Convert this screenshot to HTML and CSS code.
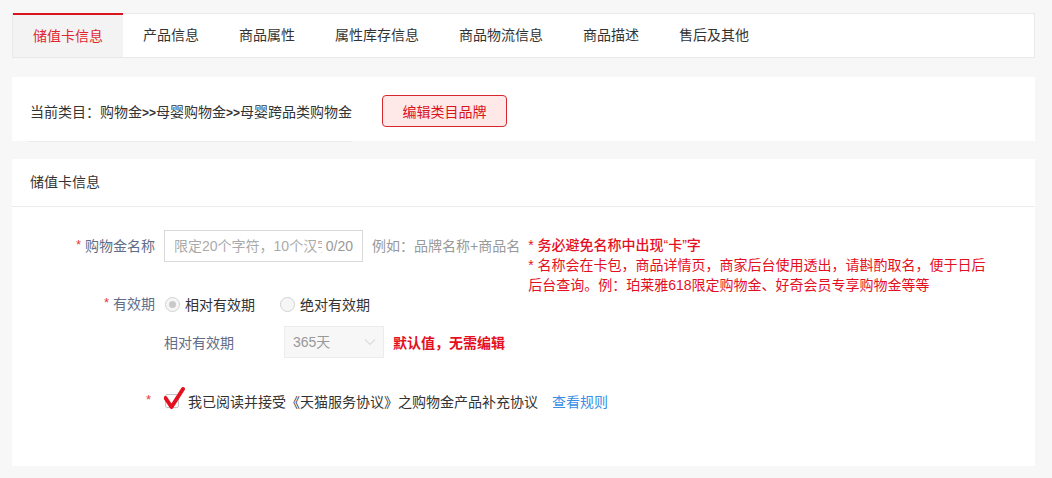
FILE: index.html
```html
<!DOCTYPE html>
<html lang="zh-CN">
<head>
  <meta charset="UTF-8" />
  <meta name="viewport" content="width=device-width, initial-scale=1.0"/>
  <title>储值卡信息</title>
  <link rel="stylesheet" href="styles.css">
</head>
<body>
  <div class="page">
    <nav class="tabs">
      <a class="tab active">储值卡信息</a>
      <a class="tab">产品信息</a>
      <a class="tab">商品属性</a>
      <a class="tab">属性库存信息</a>
      <a class="tab">商品物流信息</a>
      <a class="tab">商品描述</a>
      <a class="tab">售后及其他</a>
    </nav>

    <section class="card category">
      <span class="category-path">当前类目：购物金<b>&gt;&gt;</b>母婴购物金<b>&gt;&gt;</b>母婴跨品类购物金</span>
      <button type="button" class="btn-edit">编辑类目品牌</button>
    </section>

    <section class="card info">
      <header class="card-head">储值卡信息</header>
      <form class="form">
        <div class="form-item item-name">
          <label class="form-label"><i>*</i>购物金名称</label>
          <div class="form-control">
            <div class="input-wrap">
              <input type="text" placeholder="限定20个字符，10个汉字" />
              <span class="count">0/20</span>
            </div>
            <span class="example">例如：品牌名称+商品名</span>
            <div class="hint">
              <div class="hint-main">* 务必避免名称中出现“卡”字</div>
              <div class="hint-sub">* 名称会在卡包，商品详情页，商家后台使用透出，请斟酌取名，便于日后后台查询。例：珀莱雅618限定购物金、好奇会员专享购物金等等</div>
            </div>
          </div>
        </div>

        <div class="form-item item-valid">
          <label class="form-label"><i>*</i>有效期</label>
          <div class="form-control column">
            <div class="radios">
              <span class="radio checked"><span class="radio-dot"></span>相对有效期</span>
              <span class="radio"><span class="radio-dot"></span>绝对有效期</span>
            </div>
            <div class="sub-row">
              <span class="sub-label">相对有效期</span>
              <div class="select">
                <select disabled>
                  <option>365天</option>
                </select>
                <svg class="arrow" width="12" height="8" viewBox="0 0 12 8"><path d="M1 1.5 L6 6.5 L11 1.5" fill="none" stroke="#dcdcdc" stroke-width="1.2"/></svg>
              </div>
              <span class="red-note">默认值，无需编辑</span>
            </div>
          </div>
        </div>

        <div class="form-item item-agree">
          <label class="form-label"><i>*</i></label>
          <div class="form-control center">
            <span class="check">
              <svg class="tick" width="24" height="26" viewBox="0 0 24 26"><path d="M1.5 13 L7.5 22 L19 4" fill="none" stroke="#e5101f" stroke-width="4" stroke-linecap="round" stroke-linejoin="round"/></svg>
            </span>
            <span class="agree-text">我已阅读并接受《天猫服务协议》之购物金产品补充协议</span>
            <a class="rule-link">查看规则</a>
          </div>
        </div>
      </form>
    </section>
  </div>
</body>
</html>
```

FILE: styles.css
```css
body {
  margin: 0;
  background: #f7f7f7;
  font-family: "Liberation Sans", "Noto Sans CJK SC", sans-serif;
  font-size: 14px;
  color: #333;
}
.page {
  padding: 13px 17px 12px 12px;
}
.tabs {
  display: flex;
  height: 43px;
  background: #fff;
  border: 1px solid #e9e9e9;
}
.tab {
  padding: 0 20px;
  line-height: 43px;
  color: #333;
  cursor: pointer;
}
.tab.active {
  margin-top: -1px;
  line-height: 42px;
  background: #f3f3f3;
  border-top: 2px solid #d9161e;
  color: #e0262d;
}
.card {
  background: #fff;
}
.category {
  position: relative;
  display: flex;
  align-items: center;
  height: 60px;
  margin-top: 19px;
  padding: 4px 18px 0;
}
.category::after {
  content: "";
  position: absolute;
  left: 16px;
  bottom: -1px;
  width: 324px;
  height: 1px;
  background: #ebebeb;
}
.category-path b {
  font-size: 12px;
}
.btn-edit {
  margin-left: 30px;
  width: 125px;
  height: 32px;
  background: #ffe8e8;
  border: 1px solid #d8262d;
  border-radius: 4px;
  color: #d9141c;
  font: inherit;
  cursor: pointer;
}
.info {
  margin-top: 18px;
}
.card-head {
  height: 47px;
  line-height: 47px;
  padding: 0 18px;
  border-bottom: 1px solid #ececec;
}
.form {
  padding: 23px 0 48px;
}
.form-item {
  display: flex;
}
.form-label {
  flex-shrink: 0;
  width: 143px;
  margin-right: 9px;
  text-align: right;
  line-height: 32px;
  color: #5f6d88;
}
.form-label i {
  font-style: normal;
  font-size: 13px;
  color: #e4393c;
  margin-right: 4px;
  position: relative;
  top: -2px;
}
.form-control {
  display: flex;
  align-items: flex-start;
}
.form-control.column {
  flex-direction: column;
}
.form-control.center {
  align-items: center;
  height: 32px;
}
.item-name {
  height: 32px;
  margin-bottom: 26px;
}
.item-valid {
  margin-bottom: 27px;
}
.input-wrap {
  position: relative;
  width: 199px;
  height: 32px;
}
.input-wrap input {
  box-sizing: border-box;
  width: 100%;
  height: 32px;
  padding: 0 40px 0 9px;
  border: 1px solid #d9d9d9;
  font: inherit;
  color: #333;
  outline: none;
}
.input-wrap input::placeholder {
  color: #aaa;
}
.count {
  position: absolute;
  right: 10px;
  top: 0;
  line-height: 32px;
  color: #999;
}
.example {
  margin-left: 9px;
  line-height: 32px;
  color: #999;
}
.hint {
  flex-shrink: 0;
  width: 466px;
  margin-left: 8px;
  padding-top: 5px;
  line-height: 20px;
  color: #e5101f;
}
.hint-main {
  font-weight: 500;
}
.radios {
  display: flex;
  align-items: center;
  height: 32px;
}
.radio {
  display: inline-flex;
  align-items: center;
  margin-right: 25px;
  margin-left: 1px;
}
.radio + .radio {
  margin-left: 0;
}
.radio-dot {
  position: relative;
  width: 13px;
  height: 13px;
  margin-right: 5px;
  border: 1px solid #d2d2d2;
  border-radius: 50%;
  background: #f6f6f6;
}
.radio.checked .radio-dot::after {
  content: "";
  position: absolute;
  left: 3px;
  top: 3px;
  width: 7px;
  height: 7px;
  border-radius: 50%;
  background: #c9c9c9;
}
.sub-row {
  display: flex;
  align-items: center;
  height: 32px;
  margin-top: 6px;
}
.sub-label {
  width: 120px;
  color: #5f6d88;
}
.select {
  position: relative;
  width: 100px;
  height: 32px;
}
.select select {
  box-sizing: border-box;
  width: 100%;
  height: 32px;
  padding: 0 0 0 8px;
  appearance: none;
  background: #f7f7f7;
  border: 1px solid #ececec;
  border-radius: 0;
  font: inherit;
  color: #999;
  opacity: 1;
}
.arrow {
  position: absolute;
  right: 8px;
  top: 12px;
}
.red-note {
  margin-left: 9px;
  color: #e5101f;
  font-weight: bold;
}
.check {
  position: relative;
  width: 12px;
  height: 12px;
  margin-left: 1px;
  border: 1px solid #c5c5c5;
  border-radius: 2px;
  background: #fff;
}
.tick {
  position: absolute;
  left: -2px;
  top: -10px;
}
.agree-text {
  margin-left: 9px;
  color: #333;
}
.rule-link {
  margin-left: 14px;
  color: #3a8ee6;
  cursor: pointer;
}
```
